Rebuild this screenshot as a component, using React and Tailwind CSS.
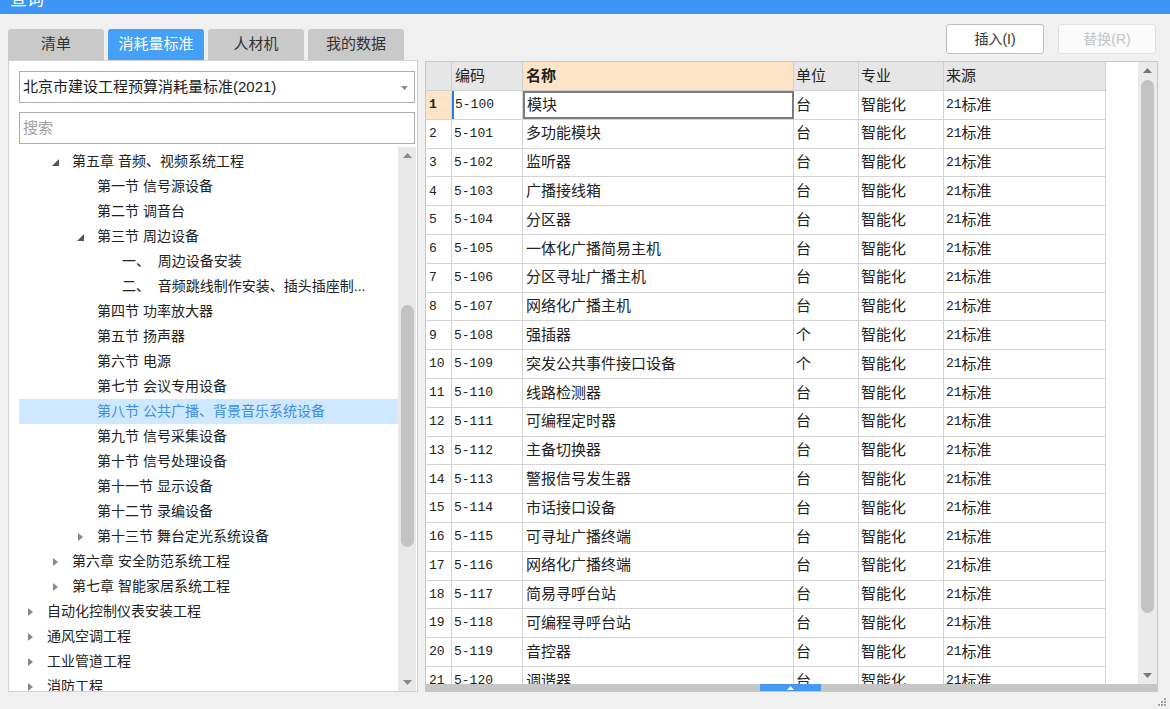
import { useState } from "react";

const rows = [
  ["5-100", "模块", "台"],
  ["5-101", "多功能模块", "台"],
  ["5-102", "监听器", "台"],
  ["5-103", "广播接线箱", "台"],
  ["5-104", "分区器", "台"],
  ["5-105", "一体化广播简易主机", "台"],
  ["5-106", "分区寻址广播主机", "台"],
  ["5-107", "网络化广播主机", "台"],
  ["5-108", "强插器", "个"],
  ["5-109", "突发公共事件接口设备", "个"],
  ["5-110", "线路检测器", "台"],
  ["5-111", "可编程定时器", "台"],
  ["5-112", "主备切换器", "台"],
  ["5-113", "警报信号发生器", "台"],
  ["5-114", "市话接口设备", "台"],
  ["5-115", "可寻址广播终端", "台"],
  ["5-116", "网络化广播终端", "台"],
  ["5-117", "简易寻呼台站", "台"],
  ["5-118", "可编程寻呼台站", "台"],
  ["5-119", "音控器", "台"],
  ["5-120", "调谐器", "台"],
];

// level, label, arrow: "open" | "closed" | null
const tree = [
  [1, "第五章 音频、视频系统工程", "open"],
  [2, "第一节 信号源设备", null],
  [2, "第二节 调音台", null],
  [2, "第三节 周边设备", "open"],
  [3, "一、  周边设备安装", null],
  [3, "二、  音频跳线制作安装、插头插座制...", null],
  [2, "第四节 功率放大器", null],
  [2, "第五节 扬声器", null],
  [2, "第六节 电源", null],
  [2, "第七节 会议专用设备", null],
  [2, "第八节 公共广播、背景音乐系统设备", null, true],
  [2, "第九节 信号采集设备", null],
  [2, "第十节 信号处理设备", null],
  [2, "第十一节 显示设备", null],
  [2, "第十二节 录编设备", null],
  [2, "第十三节 舞台定光系统设备", "closed"],
  [1, "第六章 安全防范系统工程", "closed"],
  [1, "第七章 智能家居系统工程", "closed"],
  [0, "自动化控制仪表安装工程", "closed"],
  [0, "通风空调工程", "closed"],
  [0, "工业管道工程", "closed"],
  [0, "消防工程", "closed"],
];

const indent = ["pl-[8px]", "pl-[33px]", "pl-[58px]", "pl-[83px]"];

const Arrow = ({ type }) => {
  if (type === "open") {
    return (
      <svg width="7" height="7" viewBox="0 0 7 7" className="mt-[2px]">
        <path d="M7 0 L7 7 L0 7 Z" fill="#555" />
      </svg>
    );
  }
  if (type === "closed") {
    return (
      <svg width="5" height="8" viewBox="0 0 5 8">
        <path d="M0 0 L5 4 L0 8 Z" fill="#888" />
      </svg>
    );
  }
  return <span className="w-[7px]" />;
};

const Tri = ({ dir, color = "#8a8a8a" }) => (
  <svg width="9" height="5" viewBox="0 0 9 5">
    {dir === "up" ? (
      <path d="M0 5 L4.5 0 L9 5 Z" fill={color} />
    ) : (
      <path d="M0 0 L4.5 5 L9 0 Z" fill={color} />
    )}
  </svg>
);

const tabs = ["清单", "消耗量标准", "人材机", "我的数据"];

export default function App() {
  const [activeTab, setActiveTab] = useState(1);

  return (
    <div className="w-[1170px] h-[709px] bg-[#f0f0f0] overflow-hidden relative font-['Liberation_Sans','Noto_Sans_CJK_SC',sans-serif] text-[#222]">
      {/* title bar */}
      <div className="h-[14px] bg-[#3d95f6] overflow-hidden">
        <div className="pl-[10px] -mt-[11px] text-[17px] leading-[22px] text-white">查询</div>
      </div>

      <div className="flex px-[8px]">
        {/* left column */}
        <div className="w-[410px] flex flex-col">
          <div className="mt-[15px] h-[31px] flex gap-[4px]">
            {tabs.map((t, i) => (
              <button
                key={t}
                onClick={() => setActiveTab(i)}
                className={`w-[96px] h-[31px] rounded-t-[3px] text-[15px] ${
                  activeTab === i ? "bg-[#44a0f8] text-white" : "bg-[#c9c9c9] text-[#333]"
                }`}
              >
                {t}
              </button>
            ))}
          </div>

          <div className="h-[632px] bg-white border border-[#d2d2d2] flex flex-col">
            <div className="pl-[10px] pr-[2px] pt-[10px]">
              <div className="h-[32px] border border-[#acacac] flex items-center justify-between pl-[3px] pr-[6px] pt-[1px] text-[15px]">
                <span>北京市建设工程预算消耗量标准(2021)</span>
                <svg width="7" height="4" viewBox="0 0 7 4">
                  <path d="M0 0 L3.5 4 L7 0 Z" fill="#888" />
                </svg>
              </div>
              <div className="mt-[9px] h-[32px] border border-[#acacac] flex items-center pl-[3px] pt-[1px] text-[15px] text-[#a0a0a0]">
                搜索
              </div>
            </div>

            <div className="flex-1 min-h-0 flex pl-[10px] pr-[1px] pt-[3px]">
              <div className="flex-1 overflow-hidden pt-[2px]">
                {tree.map(([lvl, label, arrow, sel], i) => (
                  <div
                    key={i}
                    className={`h-[25px] flex items-center gap-[13px] text-[14px] whitespace-pre ${indent[lvl]} ${
                      sel ? "bg-[#cde8ff] text-[#3d8fe6]" : ""
                    }`}
                  >
                    <span className="w-[7px] flex justify-center">
                      <Arrow type={arrow} />
                    </span>
                    <span>{label}</span>
                  </div>
                ))}
              </div>
              <div className="w-[18px] bg-[#e8e8e8] flex flex-col items-center">
                <div className="mt-[6px]">
                  <Tri dir="up" />
                </div>
                <div className="mt-[147px] w-[13px] h-[242px] rounded-full bg-[#c3c3c3]" />
                <div className="mt-auto mb-[6px]">
                  <Tri dir="down" />
                </div>
              </div>
            </div>
          </div>
        </div>

        {/* right column */}
        <div className="ml-[7px] w-[733px] flex flex-col">
          <div className="mt-[10px] h-[30px] flex justify-end gap-[14px] pr-[2px]">
            <button className="w-[98px] h-[30px] bg-white border border-[#bdbdbd] rounded-[3px] text-[14px] text-[#333]">
              插入(I)
            </button>
            <button className="w-[98px] h-[30px] bg-[#fbfbfb] border border-[#e0e0e0] rounded-[3px] text-[14px] text-[#c4c4c4]">
              替换(R)
            </button>
          </div>

          <div className="mt-[7px] h-[631px] bg-white border border-[#c8c8c8] flex flex-col">
            <div className="flex-1 min-h-0 flex">
              <div className="w-[680px] overflow-hidden">
                <div className="flex h-[29px] bg-[#e6e6e6] border-b border-[#cfcfcf] text-[15px]">
                  <div className="w-[26px] border-r border-[#cfcfcf]" />
                  <div className="w-[71px] border-r border-[#cfcfcf] pl-[3px] flex items-center">编码</div>
                  <div className="w-[271px] border-r border-[#cfcfcf] pl-[3px] flex items-center bg-[#fde4c9] font-bold">名称</div>
                  <div className="w-[65px] border-r border-[#cfcfcf] pl-[2px] flex items-center">单位</div>
                  <div className="w-[85px] border-r border-[#cfcfcf] pl-[2px] flex items-center">专业</div>
                  <div className="w-[162px] border-r border-[#cfcfcf] pl-[2px] flex items-center">来源</div>
                </div>
                {rows.map(([code, name, unit], i) => (
                  <div key={code} className="flex h-[28.8px] border-b border-[#d4d4d4] text-[15px]">
                    <div
                      className={`w-[26px] border-r border-[#d4d4d4] pl-[3px] flex items-center font-['Liberation_Mono',monospace] text-[13px] ${
                        i === 0 ? "bg-[#fde4c9] font-bold" : ""
                      }`}
                    >
                      {i + 1}
                    </div>
                    <div
                      className={`w-[71px] border-r border-[#d4d4d4] flex items-center font-['Liberation_Mono',monospace] text-[13px] ${
                        i === 0 ? "border-l-2 border-l-[#1f7ef2] pl-[1px]" : "pl-[2px]"
                      }`}
                    >
                      {code}
                    </div>
                    <div
                      className={`w-[271px] flex items-center ${
                        i === 0 ? "border-2 border-[#7d7d7d] pl-[2px]" : "border-r border-[#d4d4d4] pl-[3px]"
                      }`}
                    >
                      {name}
                    </div>
                    <div className="w-[65px] border-r border-[#d4d4d4] pl-[2px] flex items-center">{unit}</div>
                    <div className="w-[85px] border-r border-[#d4d4d4] pl-[2px] flex items-center">智能化</div>
                    <div className="w-[162px] border-r border-[#d4d4d4] pl-[2px] flex items-center">
                      <span className="font-['Liberation_Mono',monospace] text-[13px]">21</span>标准
                    </div>
                  </div>
                ))}
              </div>
              <div className="w-[32px] bg-white" />
              <div className="w-[19px] bg-[#ebebeb] flex flex-col items-center">
                <div className="mt-[6px]">
                  <Tri dir="up" color="#777" />
                </div>
                <div className="mt-[7px] w-[13px] h-[533px] rounded-full bg-[#c3c3c3]" />
                <div className="mt-auto mb-[6px]">
                  <Tri dir="down" color="#777" />
                </div>
              </div>
            </div>
            <div className="h-[7px] bg-[#c6c6c6] flex">
              <div className="ml-[334px] w-[61px] h-[7px] bg-[#4499f2] flex items-center justify-center">
                <svg width="7" height="4" viewBox="0 0 7 4">
                  <path d="M0 4 L3.5 0 L7 4 Z" fill="#fff" />
                </svg>
              </div>
            </div>
          </div>
        </div>
      </div>

      {/* resize grip */}
      <div className="absolute right-[4px] bottom-[3px] grid grid-cols-3 gap-[1px] w-[8px] h-[8px]">
        <span />
        <span />
        <span className="w-[2px] h-[2px] bg-[#a0a0a0]" />
        <span />
        <span className="w-[2px] h-[2px] bg-[#a0a0a0]" />
        <span className="w-[2px] h-[2px] bg-[#a0a0a0]" />
        <span className="w-[2px] h-[2px] bg-[#a0a0a0]" />
        <span className="w-[2px] h-[2px] bg-[#a0a0a0]" />
        <span className="w-[2px] h-[2px] bg-[#a0a0a0]" />
      </div>
    </div>
  );
}
